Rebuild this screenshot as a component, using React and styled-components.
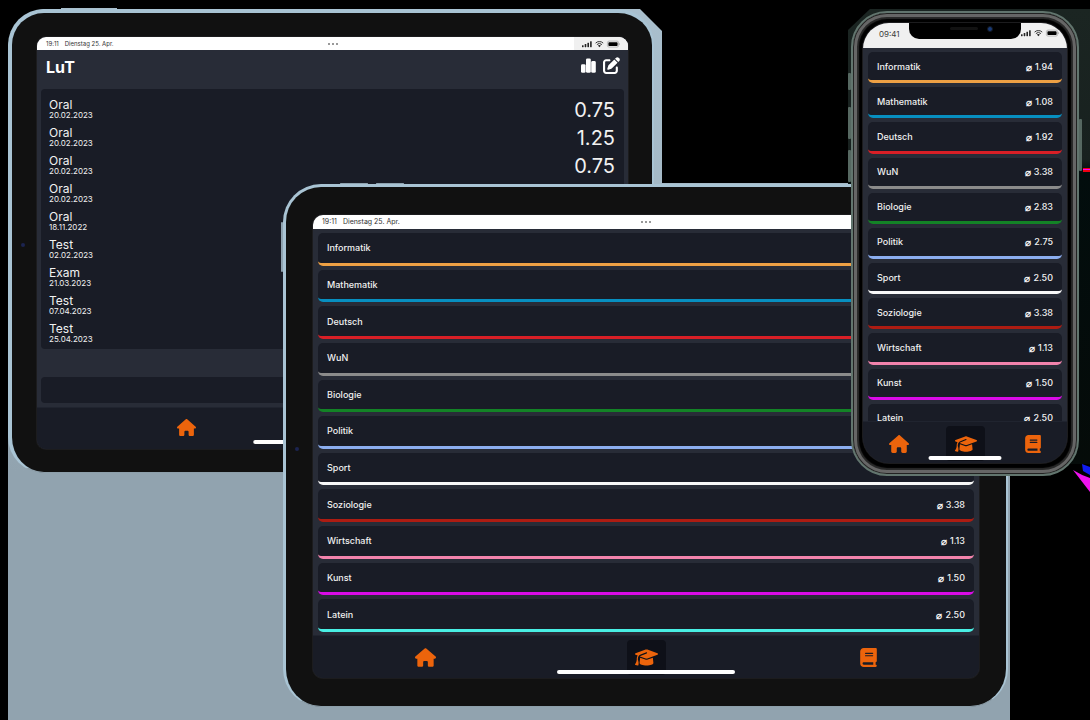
import React from "react";
import styled, { createGlobalStyle } from "styled-components";
import { FaHouse, FaGraduationCap, FaBook, FaPenToSquare } from "react-icons/fa6";

const GlobalStyle = createGlobalStyle`
  * { box-sizing: border-box; }
  body { margin: 0; background: #000; font-family: Inter, "Liberation Sans", sans-serif; }
  ul { list-style: none; margin: 0; padding: 0; }
  h1 { margin: 0; }
`;

const Stage = styled.main`
  position: relative;
  width: 100%;
  min-height: max(100vh, 720px);
  overflow: hidden;
  background: #000;
`;

const Backdrop = styled.svg`
  position: absolute;
  inset: 0;
  width: 100%;
  height: 100%;
`;

const Tablet = styled.section`
  position: absolute;
  background: #111;
  border-style: solid;
  border-color: #a9c4d4 #a9c4d4 #8d9faa #a9c4d4;
`;

const BackTablet = styled(Tablet)`
  top: 9px;
  left: 8px;
  right: 436px;
  border-width: 4px 2px 1px 4px;
  border-radius: 36px;
  padding: 24px 24px 23px 25px;
`;

const FrontTablet = styled(Tablet)`
  top: 184px;
  left: 283px;
  right: 82px;
  border-width: 3px 2px 1px 3px;
  border-radius: 38px;
  padding: 28px 27px 28px 27px;
`;

const EdgeKey = styled.span`
  position: absolute;
  background: #8fa3b0;
  border-radius: 1px;
`;

const TopKey = styled(EdgeKey)`
  top: -4px;
  left: ${(p) => p.$left}px;
  width: 28px;
  height: 1px;
`;

const LeftKey = styled(EdgeKey)`
  left: -5px;
  top: 35px;
  width: 2px;
  height: 50px;
`;

const Camera = styled.span`
  position: absolute;
  left: ${(p) => p.$left}px;
  top: 50%;
  width: 4px;
  height: 4px;
  border-radius: 50%;
  background: #1c2450;
`;

const Screen = styled.div`
  position: relative;
  display: flex;
  flex-direction: column;
  overflow: hidden;
  background: #282c37;
  color: #f1f1f1;
  border-radius: ${(p) => p.$radius}px;
  box-shadow: 0 0 0 1px #1c1c1e;
`;

const TabletStatus = styled.div`
  display: grid;
  grid-template-columns: 1fr auto 1fr;
  align-items: center;
  height: ${(p) => p.$height}px;
  background: #fff;
  color: #333;
  font-size: ${(p) => p.$size}px;
  line-height: 8px;
`;

const Clock = styled.div`
  display: flex;
  gap: 6px;
  padding-left: 9px;
  white-space: nowrap;
`;

const Dots = styled.span`
  display: flex;
  gap: 2px;
  i { width: 2px; height: 2px; border-radius: 50%; background: #777; }
`;

const StatusTray = styled.div`
  justify-self: end;
  align-self: stretch;
  display: flex;
  align-items: center;
  padding: 0 8px;
  background: #f0f0f0;
`;

const Header = styled.header`
  display: flex;
  justify-content: space-between;
  height: 39px;
  padding: 7px 8px 0 9px;
`;

const Title = styled.h1`
  font-size: 16px;
  line-height: 20px;
  font-weight: 700;
  color: #fff;
`;

const Actions = styled.div`
  display: flex;
  align-items: flex-start;
  gap: 7px;
`;

const IconButton = styled.button`
  display: flex;
  padding: 0;
  border: 0;
  background: none;
  color: #fff;
`;

const ExamList = styled.ul`
  margin: 0 4px;
  padding: 7px 9px 1px 8px;
  border-radius: 4px;
  background: #191c26;
`;

const Exam = styled.li`
  display: flex;
  align-items: center;
  justify-content: space-between;
  height: 28px;
`;

const ExamInfo = styled.div`
  padding-bottom: 3px;
`;

const ExamKind = styled.div`
  font-size: 12px;
  line-height: 12px;
`;

const ExamDate = styled.div`
  font-size: 8px;
  line-height: 8px;
`;

const Mark = styled.span`
  font-size: 20px;
  line-height: 24px;
`;

const EmptyCard = styled.div`
  height: 26px;
  margin: 28px 4px 4px;
  border-radius: 4px;
  background: #191c26;
`;

const Viewport = styled.div`
  height: ${(p) => p.$height}px;
  padding: 4px 5px 0;
  overflow: hidden;
`;

const SubjectList = styled.ul`
  display: grid;
  grid-auto-rows: 1fr;
  gap: 4px;
  height: ${(p) => p.$height}px;
`;

const Subject = styled.li`
  display: flex;
  align-items: center;
  justify-content: space-between;
  padding: 1px 9px 0;
  border-bottom: 3px solid ${(p) => p.$color};
  border-radius: 5px;
  background: #191c26;
  font-size: 9px;
  line-height: 12px;
  font-weight: 500;
`;

const Average = styled.span`
  display: flex;
  align-items: center;
  gap: 3px;
`;

const MeanSign = styled.span`
  font-size: 10px;
  font-weight: 600;
`;

const TabBar = styled.nav`
  display: grid;
  grid-auto-flow: column;
  grid-auto-columns: 1fr;
  justify-items: center;
  height: ${(p) => p.$height}px;
  padding: 4px 0 0 2px;
  border-top: 1px solid #20242f;
  background: #191c26;
`;

const Tab = styled.a`
  display: flex;
  align-items: center;
  justify-content: center;
  width: 39px;
  height: ${(p) => (p.$compact ? 31 : 35)}px;
  border-radius: 4px;
  color: #ec640c;
  background: ${(p) => (p.$active ? "#0e1018" : "transparent")};
`;

const HomeIndicator = styled.span`
  position: absolute;
  left: 50%;
  bottom: ${(p) => p.$bottom}px;
  width: ${(p) => p.$width};
  height: 4px;
  border-radius: 2px;
  background: #fff;
  transform: translateX(-50%);
`;

const Phone = styled.section`
  position: absolute;
  top: 11px;
  right: 11px;
  width: 228px;
  padding: 10px 10px 11px;
  border: 2px solid #62756e;
  border-radius: 36px;
  background: #000;
  box-shadow: inset 0 0 0 1px #222, inset 0 0 0 4px #666, inset 0 0 1px 6px #2a2a2a;
`;

const SideButton = styled.span`
  position: absolute;
  ${(p) => p.$side}: -5px;
  top: ${(p) => p.$top}px;
  width: 3px;
  height: ${(p) => p.$height}px;
  border-radius: 1px;
  background: #566861;
`;

const PhoneStatus = styled.div`
  display: flex;
  justify-content: space-between;
  height: 25px;
  padding: 6px 8px 0 16px;
  background: #f0f0f0;
  color: #3a3a3a;
  font-size: 8px;
  line-height: 10px;
`;

const Notch = styled.div`
  position: absolute;
  top: 0;
  left: 46px;
  right: 46px;
  height: 16px;
  display: flex;
  align-items: flex-start;
  justify-content: center;
  gap: 9px;
  padding: 3px 0 0 12px;
  border-radius: 0 0 10px 10px;
  background: #000;
`;

const Speaker = styled.span`
  width: 28px;
  height: 3px;
  margin-top: 1px;
  border-radius: 2px;
  background: #121212;
`;

const Lens = styled.span`
  width: 6px;
  height: 6px;
  border: 1px solid #14181f;
  border-radius: 50%;
  background: #183a78;
`;

const exams = [
  { kind: "Oral", date: "20.02.2023", mark: "0.75" },
  { kind: "Oral", date: "20.02.2023", mark: "1.25" },
  { kind: "Oral", date: "20.02.2023", mark: "0.75" },
  { kind: "Oral", date: "20.02.2023" },
  { kind: "Oral", date: "18.11.2022" },
  { kind: "Test", date: "02.02.2023" },
  { kind: "Exam", date: "21.03.2023" },
  { kind: "Test", date: "07.04.2023" },
  { kind: "Test", date: "25.04.2023" },
];

const subjects = [
  ["Informatik", "1.94", "#eda044"],
  ["Mathematik", "1.08", "#078fc0"],
  ["Deutsch", "1.92", "#d81f26"],
  ["WuN", "3.38", "#8b8b8b"],
  ["Biologie", "2.83", "#138326"],
  ["Politik", "2.75", "#8caef0"],
  ["Sport", "2.50", "#f7f7f7"],
  ["Soziologie", "3.38", "#ad1c12"],
  ["Wirtschaft", "1.13", "#f283ac"],
  ["Kunst", "1.50", "#d90be6"],
  ["Latein", "2.50", "#49efe4"],
];

function BarsIcon() {
  return (
    <svg width="15" height="16" viewBox="0 0 15 16" fill="currentColor" aria-hidden="true">
      <rect x="0" y="7.2" width="4.6" height="8.6" rx="1.4" />
      <rect x="5" y="1.4" width="4.8" height="14.4" rx="1.4" />
      <rect x="10.2" y="4" width="4.6" height="11.8" rx="1.4" />
    </svg>
  );
}

function StatusIcons() {
  return (
    <svg width="38" height="8" viewBox="0 0 38 8" aria-hidden="true">
      <g fill="#222">
        <rect x="0" y="5.2" width="1.6" height="2" rx=".4" />
        <rect x="2.7" y="4" width="1.6" height="3.2" rx=".4" />
        <rect x="5.4" y="2.7" width="1.6" height="4.5" rx=".4" />
        <rect x="8.1" y="1.2" width="1.6" height="6" rx=".4" />
        <path d="M17.4 7.2 15.9 5.6a2.2 2.2 0 0 1 3 0Z" />
        <rect x="26.4" y="2.2" width="9.2" height="3.9" rx=".8" fill="#000" />
      </g>
      <path d="M13.6 3.1a5.4 5.4 0 0 1 7.6 0M14.9 4.6a3.5 3.5 0 0 1 5 0" fill="none" stroke="#333" strokeWidth="1" />
      <rect x="25.4" y="1.1" width="11.2" height="6" rx="1.6" fill="none" stroke="#999" strokeWidth=".6" />
      <path d="M37.3 3.2v1.8" stroke="#999" strokeWidth=".7" />
    </svg>
  );
}

function TabletStatusBar({ height, size }) {
  return (
    <TabletStatus $height={height} $size={size}>
      <Clock><span>19:11</span><span>Dienstag 25. Apr.</span></Clock>
      <Dots><i /><i /><i /></Dots>
      <StatusTray><StatusIcons /></StatusTray>
    </TabletStatus>
  );
}

function Subjects({ height }) {
  return (
    <SubjectList $height={height}>
      {subjects.map(([name, average, color]) => (
        <Subject key={name} $color={color}>
          <span>{name}</span>
          <Average><MeanSign>⌀</MeanSign>{average}</Average>
        </Subject>
      ))}
    </SubjectList>
  );
}

function SubjectTabs({ height, house, cap, book }) {
  return (
    <TabBar $height={height}>
      <Tab href="#home" aria-label="Home"><FaHouse size={house} /></Tab>
      <Tab href="#subjects" aria-label="Subjects" $active><FaGraduationCap size={cap} /></Tab>
      <Tab href="#homework" aria-label="Homework"><FaBook size={book} /></Tab>
    </TabBar>
  );
}

export default function App() {
  return (
    <Stage>
      <GlobalStyle />
      <Backdrop viewBox="0 0 1090 720" preserveAspectRatio="none" aria-hidden="true">
        <defs>
          <linearGradient id="steel" x1="0" y1="0" x2="0" y2="1">
            <stop offset="0" stopColor="#a9bfcd" />
            <stop offset=".35" stopColor="#a3b7c4" />
            <stop offset=".65" stopColor="#91a3af" />
            <stop offset="1" stopColor="#91a3af" />
          </linearGradient>
          <linearGradient id="pine" x1="0" y1="0" x2="0" y2="1">
            <stop offset="0" stopColor="#1b2522" />
            <stop offset=".33" stopColor="#18211f" />
            <stop offset=".36" stopColor="#020d0d" />
            <stop offset="1" stopColor="#050b09" />
          </linearGradient>
        </defs>
        <path d="M61 8h56v4h-56zM38 9H640L662 31V183H1010V720H8V42Z" fill="url(#steel)" />
        <path d="M0 0H52V8L44 9Q12 12 8 46H0Z" fill="#000" />
        <path d="M1010 183V476H1006V183Z" fill="#000" />
        <path d="M848 30 870 9H1090V464H848Z" fill="url(#pine)" />
        <path d="M1083 168h7v4h-7z" fill="#f00012" />
        <path d="M1083 169h7v1h-7z" fill="#f0f" />
        <path d="M1082 464 1090 467V475L1083 471Z" fill="#101cf0" />
        <path d="M1073 470Q1081 475 1090 478V492Z" fill="#ee12ee" />
      </Backdrop>

      <BackTablet aria-label="Exam overview">
        <Camera $left={9} />
        <Screen $radius={9}>
          <TabletStatusBar height={13} size={6} />
          <Header>
            <Title>LuT</Title>
            <Actions>
              <IconButton aria-label="Statistics"><BarsIcon /></IconButton>
              <IconButton aria-label="Edit"><FaPenToSquare size={17} /></IconButton>
            </Actions>
          </Header>
          <ExamList>
            {exams.map((exam, i) => (
              <Exam key={i}>
                <ExamInfo>
                  <ExamKind>{exam.kind}</ExamKind>
                  <ExamDate>{exam.date}</ExamDate>
                </ExamInfo>
                {exam.mark && <Mark>{exam.mark}</Mark>}
              </Exam>
            ))}
          </ExamList>
          <EmptyCard />
          <TabBar $height={42}>
            <Tab $compact href="#home" aria-label="Home"><FaHouse size={19} /></Tab>
            <Tab $compact href="#homework" aria-label="Homework"><FaBook size={17} /></Tab>
          </TabBar>
          <HomeIndicator $bottom={5} $width="27%" />
        </Screen>
      </BackTablet>

      <FrontTablet aria-label="Subjects on a tablet">
        <TopKey $left={54} />
        <TopKey $left={90} />
        <LeftKey />
        <Camera $left={9} />
        <Screen $radius={10}>
          <TabletStatusBar height={14} size={7} />
          <Viewport $height={406}>
            <Subjects height={399} />
          </Viewport>
          <SubjectTabs height={43} house={21} cap={23} book={19} />
          <HomeIndicator $bottom={4} $width="178px" />
        </Screen>
      </FrontTablet>

      <Phone aria-label="Subjects on a phone">
        <SideButton $side="left" $top={60} $height={17} />
        <SideButton $side="left" $top={94} $height={32} />
        <SideButton $side="left" $top={137} $height={32} />
        <SideButton $side="right" $top={106} $height={52} />
        <Screen $radius={26}>
          <PhoneStatus>
            <span>09:41</span>
            <StatusIcons />
          </PhoneStatus>
          <Notch><Speaker /><Lens /></Notch>
          <Viewport $height={373}>
            <Subjects height={383} />
          </Viewport>
          <SubjectTabs height={42} house={20} cap={22} book={18} />
          <HomeIndicator $bottom={3} $width="73px" />
        </Screen>
      </Phone>
    </Stage>
  );
}
